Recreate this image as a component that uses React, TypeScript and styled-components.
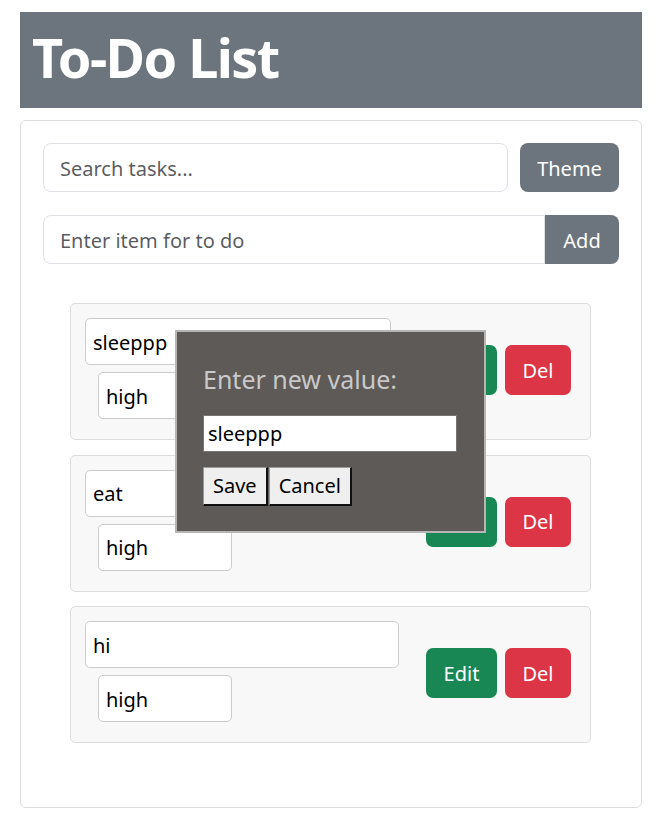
import React from 'react';
import styled, { createGlobalStyle } from 'styled-components';

const GlobalStyle = createGlobalStyle`
  html, body {
    margin: 0;
    padding: 0;
    background: #fff;
  }

  body {
    font-family: "Noto Sans", "Open Sans", sans-serif;
    color: #212529;
  }

  *, *::before, *::after {
    box-sizing: border-box;
  }
`;

const Page = styled.div`
  padding: 12px 22px 22px 20px;
`;

const Header = styled.h1`
  margin: 0;
  height: 96px;
  padding: 0 12px 6px;
  display: flex;
  align-items: center;
  background: #6c757d;
  color: #fff;
  font-size: 54px;
  font-weight: 700;
  line-height: 1.2;
  letter-spacing: -1.6px;
`;

const Card = styled.div`
  margin-top: 12px;
  padding: 22px;
  border: 1px solid #dcdcdc;
  border-radius: 6px;
`;

const Row = styled.div<{ gap?: number; marginTop?: number }>`
  display: flex;
  align-items: stretch;
  gap: ${({ gap }) => gap ?? 0}px;
  margin-top: ${({ marginTop }) => marginTop ?? 0}px;
`;

const BigInput = styled.input<{ grouped?: boolean }>`
  flex: 1;
  min-width: 0;
  height: 49px;
  padding: 1px 16px 0;
  border: 1px solid #dee2e6;
  border-radius: ${({ grouped }) => (grouped ? '8px 0 0 8px' : '8px')};
  font: inherit;
  font-size: 20px;
  color: #212529;
  outline: none;

  &::placeholder {
    color: rgba(33, 37, 41, 0.75);
  }
`;

const SecondaryButton = styled.button<{ grouped?: boolean; width: number }>`
  width: ${({ width }) => width}px;
  height: 49px;
  padding: 1px 0 0;
  border: none;
  border-radius: ${({ grouped }) => (grouped ? '0 8px 8px 0' : '8px')};
  background: #6c757d;
  color: #fff;
  font: inherit;
  font-size: 20px;
`;

const ListArea = styled.div`
  position: relative;
  margin-top: 39px;
  padding: 0 28px 42px 27px;
  display: flex;
  flex-direction: column;
  gap: 14.5px;
`;

const Item = styled.div`
  height: 137px;
  padding: 14px 19px 20px 14px;
  display: flex;
  align-items: center;
  justify-content: space-between;
  background: #f8f8f8;
  border: 1px solid #dddddd;
  border-radius: 5px;
`;

const Fields = styled.div`
  display: flex;
  flex-direction: column;
  align-items: flex-start;
  gap: 7px;
`;

const ItemInput = styled.input<{ width: number; indent?: number }>`
  width: ${({ width }) => width}px;
  height: 47px;
  margin-left: ${({ indent }) => indent ?? 0}px;
  padding: 1px 7px 0;
  background: #fff;
  border: 1px solid #cccccc;
  border-radius: 5px;
  font: inherit;
  font-size: 20px;
  color: #000;
  outline: none;
`;

const Actions = styled.div`
  display: flex;
  gap: 8px;
  margin-top: 3px;
`;

const ActionButton = styled.button<{ tone: 'edit' | 'del' }>`
  width: ${({ tone }) => (tone === 'edit' ? 71 : 66)}px;
  height: 50px;
  padding: 0;
  border: none;
  border-radius: 7px;
  background: ${({ tone }) => (tone === 'edit' ? '#198754' : '#dc3545')};
  color: #fff;
  font: inherit;
  font-size: 20px;
`;

const Modal = styled.div`
  position: absolute;
  top: 27px;
  left: 132px;
  width: 311px;
  height: 203px;
  padding: 31px 26px 0 26px;
  background: #5e5a58;
  border: 2px solid #b5b5b5;
`;

const ModalTitle = styled.p`
  margin: 0 0 19px;
  color: #c9c9c9;
  font-size: 25px;
  line-height: 1.3;
`;

const ModalInput = styled.input`
  display: block;
  width: 254px;
  height: 37px;
  padding: 0 4px;
  background: #fff;
  border: 1px solid #767676;
  font: inherit;
  font-size: 20px;
  color: #000;
  outline: none;
`;

const ModalButtons = styled.div`
  display: flex;
  gap: 1px;
  margin-top: 15px;
`;

const PlainButton = styled.button`
  height: 39px;
  padding: 0 9px;
  background: #efefef;
  border-style: solid;
  border-width: 1px 2px 2px 1px;
  border-color: #9a9a9a #111 #111 #9a9a9a;
  font: inherit;
  font-size: 20px;
  color: #000;
`;

const items = [
  { text: 'sleeppp', width: 306, priority: 'high' },
  { text: 'eat', width: 306, priority: 'high' },
  { text: 'hi', width: 314, priority: 'high' },
];

export default function App() {
  return (
    <>
      <GlobalStyle />
      <Page>
        <Header>To-Do List</Header>
        <Card>
          <Row gap={12}>
            <BigInput placeholder="Search tasks..." />
            <SecondaryButton width={99}>Theme</SecondaryButton>
          </Row>
          <Row marginTop={23}>
            <BigInput grouped placeholder="Enter item for to do" />
            <SecondaryButton grouped width={74}>Add</SecondaryButton>
          </Row>
          <ListArea>
            {items.map((item) => (
              <Item key={item.text}>
                <Fields>
                  <ItemInput width={item.width} defaultValue={item.text} />
                  <ItemInput width={134} indent={13} defaultValue={item.priority} />
                </Fields>
                <Actions>
                  <ActionButton tone="edit">Edit</ActionButton>
                  <ActionButton tone="del">Del</ActionButton>
                </Actions>
              </Item>
            ))}
            <Modal>
              <ModalTitle>Enter new value:</ModalTitle>
              <ModalInput defaultValue="sleeppp" />
              <ModalButtons>
                <PlainButton>Save</PlainButton>
                <PlainButton>Cancel</PlainButton>
              </ModalButtons>
            </Modal>
          </ListArea>
        </Card>
      </Page>
    </>
  );
}
